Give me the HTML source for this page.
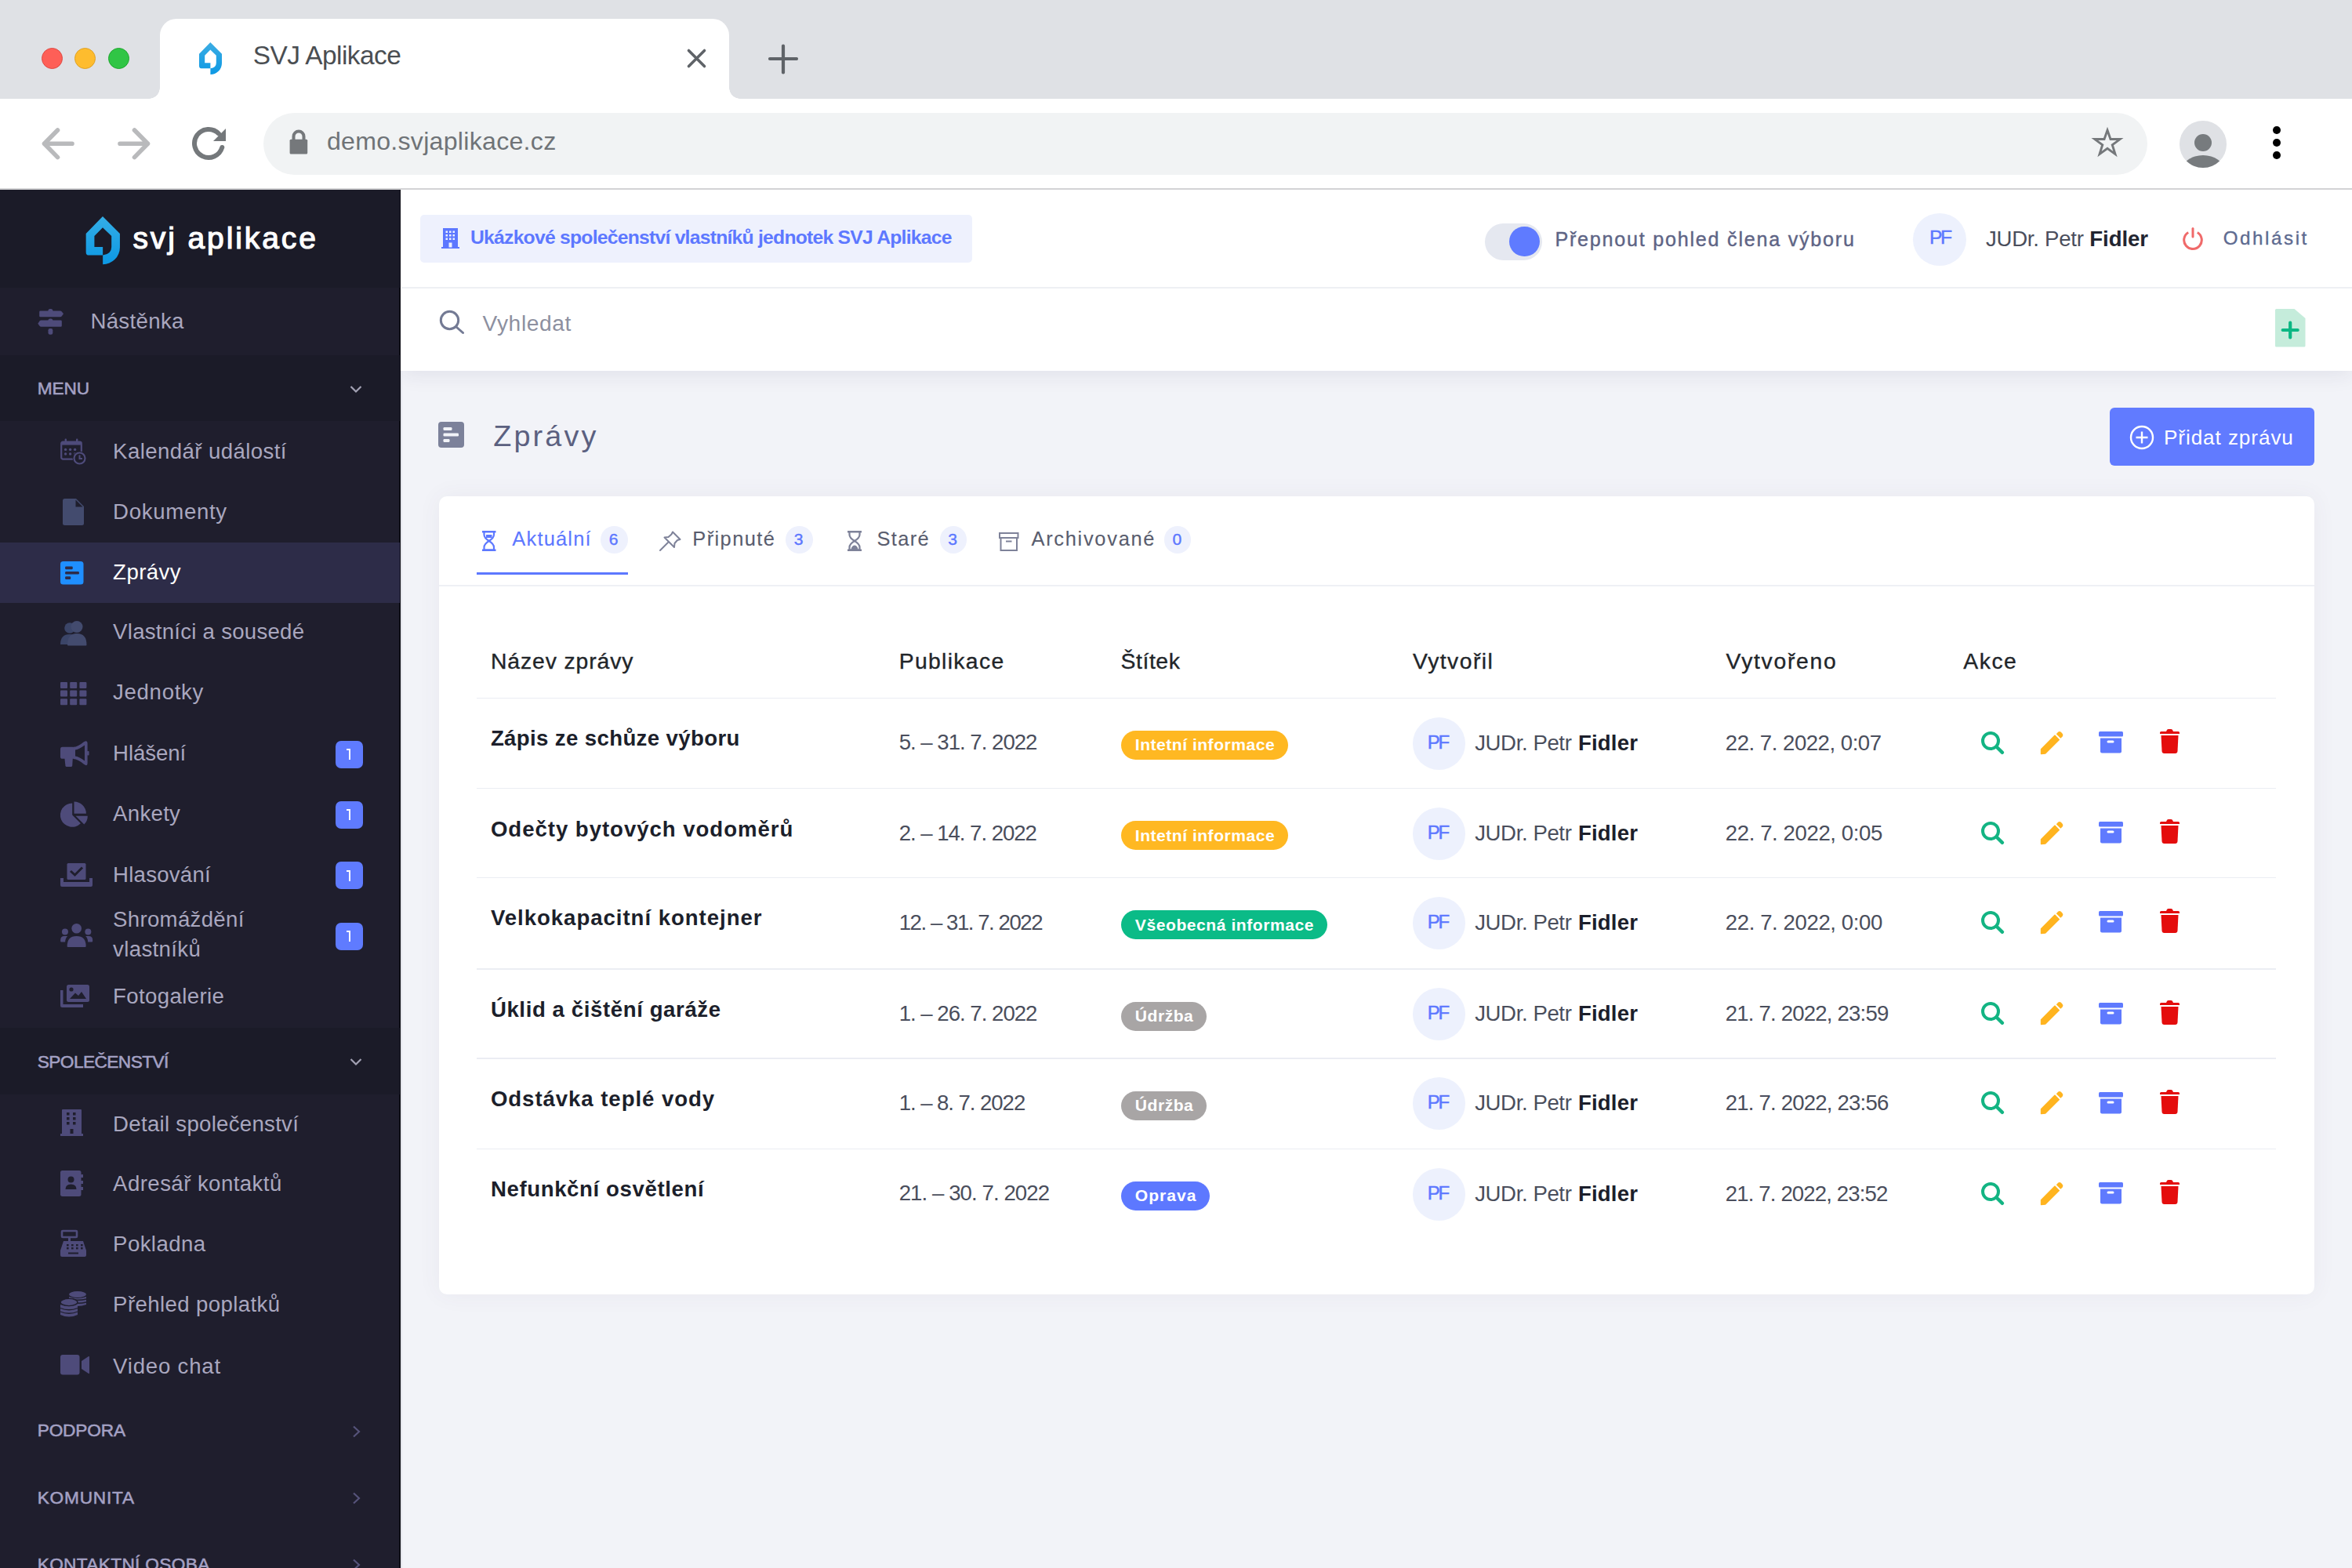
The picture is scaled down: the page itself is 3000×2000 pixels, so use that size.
<!DOCTYPE html>
<html><head><meta charset="utf-8"><title>SVJ Aplikace</title>
<style>
html,body{margin:0;padding:0;width:3000px;height:2000px;overflow:hidden;background:#fff}
body{position:relative;font-family:"Liberation Sans",sans-serif}
.abs{position:absolute}
.t{position:absolute;white-space:pre;line-height:1}
svg.abs{overflow:visible}
</style></head><body>
<div class="abs" style="left:0;top:0;width:3000px;height:126px;background:#dfe1e5"></div>
<div class="abs" style="left:53.2px;top:61.4px;width:25px;height:25px;border-radius:50%;background:#fe5f57;border:1px solid #de4a43"></div>
<div class="abs" style="left:95.2px;top:61.4px;width:25px;height:25px;border-radius:50%;background:#febc2e;border:1px solid #dea125"></div>
<div class="abs" style="left:137.6px;top:61.4px;width:25px;height:25px;border-radius:50%;background:#30c545;border:1px solid #1ea72d"></div>
<div class="abs" style="left:204px;top:24px;width:726px;height:104px;background:#fff;border-radius:21px 21px 0 0"></div>
<div class="abs" style="left:190px;top:112px;width:14px;height:14px;background:radial-gradient(circle at 0 0, #dfe1e5 13.5px, #fff 14px)"></div>
<div class="abs" style="left:930px;top:112px;width:14px;height:14px;background:radial-gradient(circle at 100% 0, #dfe1e5 13.5px, #fff 14px)"></div>
<svg class="abs" style="left:254px;top:54px" width="29" height="41" viewBox="0 0 29 41"><defs><linearGradient id="fg" x1="0" y1="0" x2="0" y2="1"><stop offset="0" stop-color="#3cade3"/><stop offset="1" stop-color="#0c98e4"/></linearGradient></defs><path fill="url(#fg)" fill-rule="evenodd" d="M14.3,0 L29,14.7 L29,26.4 A14.6,14.6 0 0 1 14.4,41 L14.4,33.2 L2.6,33.2 Q0,33.2 0,30.6 L0,14.7 Z M7.2,16.8 L14.3,9.6 L21.8,16.8 L21.8,26.2 Q21.8,32.4 14.4,33.2 L14.4,26.2 L7.2,26.2 Z"/></svg>
<div class="t" style="left:322.7px;top:54.4px;font-size:33.43px;color:#4a4e52;font-weight:400;letter-spacing:-0.54px;">SVJ Aplikace</div>
<svg class="abs" style="left:874px;top:60px" width="29" height="29" viewBox="0 0 29 29"><path d="M4.5,4.5 L24.5,24.5 M24.5,4.5 L4.5,24.5" stroke="#5f6368" stroke-width="3.6" stroke-linecap="round"/></svg>
<svg class="abs" style="left:979px;top:55px" width="40" height="40" viewBox="0 0 40 40"><path d="M20,3.6 L20,37.4 M3,20 L37,20" stroke="#5f6368" stroke-width="4.2" stroke-linecap="round"/></svg>
<div class="abs" style="left:0;top:126px;width:3000px;height:114px;background:#fff"></div>
<div class="abs" style="left:0;top:240px;width:3000px;height:2px;background:#d3d3d5"></div>
<svg class="abs" style="left:50px;top:160px" width="48" height="48" viewBox="0 0 48 48"><path d="M23.5,6 L6.5,23.3 L23.5,40.6 M6.5,23.3 L42,23.3" fill="none" stroke="#b9babc" stroke-width="5.6" stroke-linecap="round" stroke-linejoin="round"/></svg>
<svg class="abs" style="left:147px;top:160px" width="48" height="48" viewBox="0 0 48 48"><path d="M24.5,6 L41.5,23.3 L24.5,40.6 M41.5,23.3 L6,23.3" fill="none" stroke="#b9babc" stroke-width="5.6" stroke-linecap="round" stroke-linejoin="round"/></svg>
<svg class="abs" style="left:243px;top:159px" width="48" height="48" viewBox="0 0 48 48"><path d="M40.3,29 A18,18 0 1 1 36,11.5" fill="none" stroke="#74787b" stroke-width="6" stroke-linecap="round"/><path d="M45,5 L45,21 L29,21 Z" fill="#74787b"/></svg>
<div class="abs" style="left:336px;top:144px;width:2403px;height:79px;border-radius:40px;background:#f1f3f4"></div>
<svg class="abs" style="left:368px;top:164px" width="26" height="34" viewBox="0 0 26 34"><path d="M6.5,14 L6.5,10 A6.5,6.5 0 0 1 19.5,10 L19.5,14" fill="none" stroke="#75787b" stroke-width="4"/><rect x="1.6" y="13.8" width="22.6" height="18.6" rx="1.5" fill="#75787b"/></svg>
<div class="t" style="left:416.9px;top:164.3px;font-size:32.14px;color:#6f7377;font-weight:400;letter-spacing:0.27px;">demo.svjaplikace.cz</div>
<svg class="abs" style="left:2669px;top:162px" width="38" height="38" viewBox="0 0 42 42"><path d="M21,4.5 L25.4,17.2 L38.8,17.2 L27.9,25.2 L32,38.2 L21,30.2 L10,38.2 L14.1,25.2 L3.2,17.2 L16.6,17.2 Z" fill="none" stroke="#75787b" stroke-width="3.2" stroke-linejoin="miter"/></svg>
<div class="abs" style="left:2780px;top:154px;width:59.5px;height:59.5px;border-radius:50%;background:#dfe1e5;overflow:hidden"><div class="abs" style="left:18.8px;top:17.3px;width:22px;height:22px;border-radius:50%;background:#777b7e"></div><div class="abs" style="left:3px;top:43.5px;width:54px;height:40px;border-radius:50%;background:#777b7e"></div></div>
<div class="abs" style="left:2899.1px;top:161.4px;width:9.8px;height:9.8px;border-radius:50%;background:#000"></div>
<div class="abs" style="left:2899.1px;top:177.2px;width:9.8px;height:9.8px;border-radius:50%;background:#000"></div>
<div class="abs" style="left:2899.1px;top:193.1px;width:9.8px;height:9.8px;border-radius:50%;background:#000"></div>
<div class="abs" style="left:0;top:242px;width:510px;height:1758px;background:#1f1e2d"></div>
<div class="abs" style="left:508.5px;top:242px;width:2.5px;height:1758px;background:#0d0d15"></div>
<div class="abs" style="left:0;top:242px;width:510px;height:125.4px;background:#1b1b28"></div>
<div class="abs" style="left:0;top:453px;width:510px;height:84px;background:#1b1b28"></div>
<div class="abs" style="left:0;top:1311px;width:510px;height:84.5px;background:#1b1b28"></div>
<div class="abs" style="left:0;top:692px;width:510px;height:77px;background:#2d2c48"></div>
<svg class="abs" style="left:109.4px;top:275.8px" width="44.6" height="61.2" viewBox="0 0 29 41"><defs><linearGradient id="lg" x1="0" y1="0" x2="0" y2="1"><stop offset="0" stop-color="#34aee6"/><stop offset="1" stop-color="#0c98e4"/></linearGradient></defs><path fill="url(#lg)" fill-rule="evenodd" d="M14.3,0 L29,14.7 L29,26.4 A14.6,14.6 0 0 1 14.4,41 L14.4,33.2 L2.6,33.2 Q0,33.2 0,30.6 L0,14.7 Z M7.2,16.8 L14.3,9.6 L21.8,16.8 L21.8,26.2 Q21.8,32.4 14.4,33.2 L14.4,26.2 L7.2,26.2 Z"/></svg>
<div class="t" style="left:169.4px;top:284.2px;font-size:39.02px;color:#ffffff;font-weight:400;letter-spacing:2.9px;-webkit-text-stroke:1.2px #fff;">svj aplikace</div>
<svg class="abs" style="left:48px;top:393.6px" width="33" height="33" viewBox="0 0 33 33"><rect x="13.4" y="0" width="6" height="5" rx="2.5" fill="#4e4b7a"/><path d="M3.5,2.4 L28.8,2.4 Q30,2.4 30.8,3.4 L33,6.3 L30.8,9.2 Q30,10.2 28.8,10.2 L3.5,10.2 Q2.2,10.2 2.2,8.9 L2.2,3.7 Q2.2,2.4 3.5,2.4 Z" fill="#4e4b7a"/><rect x="13.4" y="12.6" width="6" height="5" rx="2.5" fill="#4e4b7a"/><path d="M4.5,14.6 L29.5,14.6 Q30.8,14.6 30.8,15.9 L30.8,21.5 Q30.8,22.8 29.5,22.8 L4.5,22.8 Q3.3,22.8 2.5,21.8 L0.3,18.7 L2.5,15.6 Q3.3,14.6 4.5,14.6 Z" fill="#4e4b7a"/><rect x="13.5" y="25" width="5.8" height="7.8" rx="2.2" fill="#4e4b7a"/></svg>
<div class="t" style="left:115.4px;top:395.6px;font-size:27.62px;color:#a9a7bf;font-weight:400;letter-spacing:0.34px;">Nástěnka</div>
<div class="t" style="left:47.8px;top:484.4px;font-size:22.67px;color:#a4a1c4;font-weight:400;letter-spacing:-0.14px;color:#a4a1c4;-webkit-text-stroke:0.55px #a4a1c4;">MENU</div>
<div class="t" style="left:47.7px;top:1343.3px;font-size:22.67px;color:#a4a1c4;font-weight:400;letter-spacing:-0.55px;color:#a4a1c4;-webkit-text-stroke:0.55px #a4a1c4;">SPOLEČENSTVÍ</div>
<div class="t" style="left:47.7px;top:1813.4px;font-size:22.67px;color:#a4a1c4;font-weight:400;letter-spacing:-0.15px;color:#a4a1c4;-webkit-text-stroke:0.55px #a4a1c4;">PODPORA</div>
<div class="t" style="left:47.7px;top:1898.5px;font-size:22.67px;color:#a4a1c4;font-weight:400;letter-spacing:0.79px;color:#a4a1c4;-webkit-text-stroke:0.55px #a4a1c4;">KOMUNITA</div>
<div class="t" style="left:47.7px;top:1983.6px;font-size:22.67px;color:#a4a1c4;font-weight:400;letter-spacing:0.34px;color:#a4a1c4;-webkit-text-stroke:0.55px #a4a1c4;">KONTAKTNÍ OSOBA</div>
<svg class="abs" style="left:446px;top:490.7px" width="16" height="12" viewBox="0 0 16 12"><path d="M1.5,2 L8,8.5 L14.5,2" fill="none" stroke="#a3a2b4" stroke-width="2.2"/></svg>
<svg class="abs" style="left:446px;top:1349px" width="16" height="12" viewBox="0 0 16 12"><path d="M1.5,2 L8,8.5 L14.5,2" fill="none" stroke="#a3a2b4" stroke-width="2.2"/></svg>
<svg class="abs" style="left:449px;top:1817.6px" width="12" height="16" viewBox="0 0 12 16"><path d="M2,1.5 L9,8 L2,14.5" fill="none" stroke="#56537a" stroke-width="2.2"/></svg>
<svg class="abs" style="left:449px;top:1902.7px" width="12" height="16" viewBox="0 0 12 16"><path d="M2,1.5 L9,8 L2,14.5" fill="none" stroke="#56537a" stroke-width="2.2"/></svg>
<svg class="abs" style="left:449px;top:1987.8px" width="12" height="16" viewBox="0 0 12 16"><path d="M2,1.5 L9,8 L2,14.5" fill="none" stroke="#56537a" stroke-width="2.2"/></svg>
<div class="t" style="left:144.1px;top:561.6px;font-size:27.62px;color:#a9a7bf;font-weight:400;letter-spacing:0.4px;">Kalendář událostí</div>
<div class="t" style="left:144.1px;top:638.6px;font-size:27.62px;color:#a9a7bf;font-weight:400;letter-spacing:0.67px;">Dokumenty</div>
<div class="t" style="left:144.1px;top:715.6px;font-size:27.62px;color:#ffffff;font-weight:400;letter-spacing:0.42px;">Zprávy</div>
<div class="t" style="left:144.1px;top:792.4px;font-size:27.62px;color:#a9a7bf;font-weight:400;letter-spacing:0.25px;">Vlastníci a sousedé</div>
<div class="t" style="left:144.1px;top:869.4px;font-size:27.62px;color:#a9a7bf;font-weight:400;letter-spacing:0.67px;">Jednotky</div>
<div class="t" style="left:144.1px;top:946.6px;font-size:27.62px;color:#a9a7bf;font-weight:400;letter-spacing:-0.1px;">Hlášení</div>
<div class="t" style="left:144.1px;top:1024.1px;font-size:27.62px;color:#a9a7bf;font-weight:400;letter-spacing:0.28px;">Ankety</div>
<div class="t" style="left:144.1px;top:1101.9px;font-size:27.62px;color:#a9a7bf;font-weight:400;letter-spacing:0.22px;">Hlasování</div>
<div class="t" style="left:144.1px;top:1159.4px;font-size:27.62px;color:#a9a7bf;font-weight:400;letter-spacing:0.3px;">Shromáždění</div>
<div class="t" style="left:144.1px;top:1197.0px;font-size:27.62px;color:#a9a7bf;font-weight:400;letter-spacing:0.34px;">vlastníků</div>
<div class="t" style="left:144.1px;top:1257.3px;font-size:27.62px;color:#a9a7bf;font-weight:400;letter-spacing:0.37px;">Fotogalerie</div>
<div class="t" style="left:144.1px;top:1419.6px;font-size:27.62px;color:#a9a7bf;font-weight:400;letter-spacing:0.28px;">Detail společenství</div>
<div class="t" style="left:144.1px;top:1496.3px;font-size:27.62px;color:#a9a7bf;font-weight:400;letter-spacing:0.43px;">Adresář kontaktů</div>
<div class="t" style="left:144.1px;top:1573.3px;font-size:27.62px;color:#a9a7bf;font-weight:400;letter-spacing:0.4px;">Pokladna</div>
<div class="t" style="left:144.1px;top:1650.2px;font-size:27.62px;color:#a9a7bf;font-weight:400;letter-spacing:0.39px;">Přehled poplatků</div>
<div class="t" style="left:144.1px;top:1728.5px;font-size:27.62px;color:#a9a7bf;font-weight:400;letter-spacing:0.79px;">Video chat</div>
<div class="abs" style="left:428px;top:944.7px;width:35px;height:35px;border-radius:7px;background:#5f7bff"></div>
<div class="abs" style="left:445px;top:955.2px;width:2.2px;height:14px;background:#fff"></div>
<div class="abs" style="left:442.4px;top:955.2px;width:3px;height:2px;background:#fff"></div>
<div class="abs" style="left:428px;top:1021.7px;width:35px;height:35px;border-radius:7px;background:#5f7bff"></div>
<div class="abs" style="left:445px;top:1032.2px;width:2.2px;height:14px;background:#fff"></div>
<div class="abs" style="left:442.4px;top:1032.2px;width:3px;height:2px;background:#fff"></div>
<div class="abs" style="left:428px;top:1099px;width:35px;height:35px;border-radius:7px;background:#5f7bff"></div>
<div class="abs" style="left:445px;top:1109.5px;width:2.2px;height:14px;background:#fff"></div>
<div class="abs" style="left:442.4px;top:1109.5px;width:3px;height:2px;background:#fff"></div>
<div class="abs" style="left:428px;top:1176.6px;width:35px;height:35px;border-radius:7px;background:#5f7bff"></div>
<div class="abs" style="left:445px;top:1187.1px;width:2.2px;height:14px;background:#fff"></div>
<div class="abs" style="left:442.4px;top:1187.1px;width:3px;height:2px;background:#fff"></div>
<svg class="abs" style="left:77px;top:559px" width="34" height="35" viewBox="0 0 34 35"><rect x="1.2" y="4.6" width="25.6" height="22" rx="2.2" fill="none" stroke="#4e4b7a" stroke-width="2.2"/><rect x="1.2" y="4.6" width="25.6" height="4" fill="#4e4b7a"/><rect x="5.6" y="0.5" width="2.4" height="6" rx="1" fill="#4e4b7a"/><rect x="20" y="0.5" width="2.4" height="6" rx="1" fill="#4e4b7a"/><circle cx="6.6" cy="14.4" r="1.7" fill="#4e4b7a"/><circle cx="6.6" cy="20.0" r="1.7" fill="#4e4b7a"/><circle cx="12.6" cy="14.4" r="1.7" fill="#4e4b7a"/><circle cx="12.6" cy="20.0" r="1.7" fill="#4e4b7a"/><circle cx="18.6" cy="14.4" r="1.7" fill="#4e4b7a"/><circle cx="18.6" cy="20.0" r="1.7" fill="#4e4b7a"/><circle cx="24.5" cy="25.5" r="9" fill="#1f1e2d"/><circle cx="24.5" cy="25.5" r="7" fill="none" stroke="#4e4b7a" stroke-width="2.2"/><path d="M24.5,21.5 L24.5,26 L28,26" fill="none" stroke="#4e4b7a" stroke-width="2"/></svg>
<svg class="abs" style="left:80px;top:636px" width="27" height="34" viewBox="0 0 27 34"><path d="M2.5,0 L17,0 L27,10 L27,31.5 Q27,34 24.5,34 L2.5,34 Q0,34 0,31.5 L0,2.5 Q0,0 2.5,0 Z" fill="#434b6e"/><path d="M16.5,1.5 L16.5,10.5 L25.5,10.5 Z" fill="#1f1e2d"/></svg>
<svg class="abs" style="left:77px;top:715.6px" width="29.5" height="29.5" viewBox="0 0 29 29"><rect x="0" y="0" width="29" height="29" rx="3.5" fill="#1f8fff"/><rect x="6" y="6.5" width="9.5" height="3.5" rx="1.2" fill="#2d2c48"/><rect x="6" y="12.8" width="17.5" height="3.5" rx="1.2" fill="#2d2c48"/><rect x="6" y="19" width="7" height="3.5" rx="1.2" fill="#2d2c48"/></svg>
<svg class="abs" style="left:77px;top:792px" width="34" height="32" viewBox="0 0 34 32"><circle cx="12" cy="9" r="6.8" fill="#3b4568"/><path d="M0,30 Q0,17 12,17 Q24,17 24,30 Z" fill="#3b4568"/><circle cx="21" cy="7.5" r="7.5" fill="#434b6e"/><path d="M9,30.5 Q9,16 21,16 Q33.5,16 33.5,30.5 Q33.5,31.5 32.5,31.5 L10,31.5 Q9,31.5 9,30.5 Z" fill="#434b6e"/></svg>
<svg class="abs" style="left:77px;top:870px" width="34" height="30" viewBox="0 0 34 30"><rect x="0.0" y="0.0" width="9" height="8" rx="1" fill="#4e4b7a"/><rect x="0.0" y="10.6" width="9" height="8" rx="1" fill="#4e4b7a"/><rect x="0.0" y="21.2" width="9" height="8" rx="1" fill="#4e4b7a"/><rect x="12.2" y="0.0" width="9" height="8" rx="1" fill="#4e4b7a"/><rect x="12.2" y="10.6" width="9" height="8" rx="1" fill="#4e4b7a"/><rect x="12.2" y="21.2" width="9" height="8" rx="1" fill="#4e4b7a"/><rect x="24.4" y="0.0" width="9" height="8" rx="1" fill="#4e4b7a"/><rect x="24.4" y="10.6" width="9" height="8" rx="1" fill="#4e4b7a"/><rect x="24.4" y="21.2" width="9" height="8" rx="1" fill="#4e4b7a"/></svg>
<svg class="abs" style="left:77px;top:945px" width="37" height="33" viewBox="0 0 37 33"><rect x="0" y="7.8" width="18" height="15" rx="2.6" fill="#4e4b7a"/><path d="M5.4,22 L15.8,22 L15.2,31.5 Q15,33 13.5,33 L8,33 Q6.6,33 6.4,31.5 Z" fill="#4e4b7a"/><path fill-rule="evenodd" fill="#4e4b7a" d="M16.5,7.8 Q22,7.8 30,1.2 Q34.6,-1.4 34.6,3 L34.6,28.6 Q34.6,33 30,29.8 Q22,23 16.5,23 Z M19,11.6 Q23.5,11 31,5.6 L31,25.4 Q23.5,20 19,19.4 Z"/><rect x="34" y="13" width="2.6" height="5.6" rx="1" fill="#4e4b7a"/></svg>
<svg class="abs" style="left:77px;top:1022px" width="35" height="34" viewBox="0 0 35 34"><path d="M15.2,17.6 L15.2,2.4 A15.2,15.2 0 1 0 25.9,28.3 Z" fill="#4e4b7a"/><path d="M17.5,0.4 A15.4,15.4 0 0 1 32.9,15.8 L17.5,15.8 Z" fill="#4e4b7a"/><path d="M19.5,18.7 L34.8,18.7 A15.3,15.3 0 0 1 30.3,29.5 Z" fill="#4e4b7a"/></svg>
<svg class="abs" style="left:77px;top:1101px" width="41" height="30" viewBox="0 0 41 30"><rect x="8.5" y="0" width="24" height="21" rx="1.5" fill="#4e4b7a"/><path d="M13,10 L18.5,15 L28,5.5" fill="none" stroke="#1f1e2d" stroke-width="3"/><path d="M0,19 L4,19 L4,24 L37,24 L37,19 L41,19 L41,28 Q41,30 39,30 L2,30 Q0,30 0,28 Z" fill="#4e4b7a"/></svg>
<svg class="abs" style="left:77px;top:1178px" width="41.3" height="30" viewBox="0 0 41 30"><circle cx="20.5" cy="6.3" r="6.3" fill="#4e4b7a"/><circle cx="5.8" cy="10.4" r="4" fill="#4e4b7a"/><circle cx="35.2" cy="10.4" r="4" fill="#4e4b7a"/><path d="M8.5,29 Q8.5,16 20.5,16 Q32.5,16 32.5,29 Q32.5,30 31.5,30 L9.5,30 Q8.5,30 8.5,29 Z" fill="#4e4b7a"/><path d="M0,21 Q0,16 5,16 L9,16 Q6,19 6,23.5 L1,23.5 Q0,23.5 0,22.5 Z" fill="#4e4b7a"/><path d="M41,21 Q41,16 36,16 L32,16 Q35,19 35,23.5 L40,23.5 Q41,23.5 41,22.5 Z" fill="#4e4b7a"/></svg>
<svg class="abs" style="left:77px;top:1255.8px" width="37" height="29" viewBox="0 0 37 29"><rect x="8" y="0" width="29" height="22" rx="2.5" fill="#4e4b7a"/><circle cx="14" cy="6" r="2.6" fill="#1f1e2d"/><path d="M12,18 L19,10.5 L23,14 L27,9 L33,18 Z" fill="#1f1e2d"/><path d="M0,7 L3.5,7 L3.5,25 L29,25 L29,29 L2.5,29 Q0,29 0,26.5 Z" fill="#4e4b7a"/></svg>
<svg class="abs" style="left:77px;top:1415.4px" width="29" height="34" viewBox="0 0 29 34"><rect x="2" y="0" width="25" height="33" rx="1" fill="#4e4b7a"/><rect x="0" y="31" width="29" height="3" fill="#4e4b7a"/><rect x="8" y="4" width="3.5" height="3.5" fill="#1f1e2d"/><rect x="8" y="10" width="3.5" height="3.5" fill="#1f1e2d"/><rect x="8" y="16" width="3.5" height="3.5" fill="#1f1e2d"/><rect x="16" y="4" width="3.5" height="3.5" fill="#1f1e2d"/><rect x="16" y="10" width="3.5" height="3.5" fill="#1f1e2d"/><rect x="16" y="16" width="3.5" height="3.5" fill="#1f1e2d"/><rect x="12.5" y="25" width="4" height="6" fill="#1f1e2d"/></svg>
<svg class="abs" style="left:77px;top:1493px" width="29" height="33" viewBox="0 0 29 33"><path d="M2.5,0 L24,0 Q26.5,0 26.5,2.5 L26.5,5 L29,5 L29,9 L26.5,9 L26.5,13 L29,13 L29,17 L26.5,17 L26.5,21 L29,21 L29,25 L26.5,25 L26.5,30.5 Q26.5,33 24,33 L2.5,33 Q0,33 0,30.5 L0,2.5 Q0,0 2.5,0 Z" fill="#4e4b7a"/><circle cx="13.5" cy="11.5" r="4" fill="#1f1e2d"/><path d="M6.5,24 Q6.5,17.5 13.5,17.5 Q20.5,17.5 20.5,24 Z" fill="#1f1e2d"/></svg>
<svg class="abs" style="left:77px;top:1570px" width="33" height="33" viewBox="0 0 33 33"><rect x="2" y="0" width="19" height="8" rx="1" fill="none" stroke="#4e4b7a" stroke-width="2.6"/><rect x="10" y="8" width="3" height="6" fill="#4e4b7a"/><path d="M4,13 L29,13 L33,25 L33,31 Q33,33 31,33 L2,33 Q0,33 0,31 L0,25 Z" fill="#4e4b7a"/><rect x="8" y="17" width="2.6" height="2.4" fill="#1f1e2d"/><rect x="8" y="21" width="2.6" height="2.4" fill="#1f1e2d"/><rect x="14" y="17" width="2.6" height="2.4" fill="#1f1e2d"/><rect x="14" y="21" width="2.6" height="2.4" fill="#1f1e2d"/><rect x="20" y="17" width="2.6" height="2.4" fill="#1f1e2d"/><rect x="20" y="21" width="2.6" height="2.4" fill="#1f1e2d"/><rect x="26" y="17" width="2.6" height="2.4" fill="#1f1e2d"/><rect x="26" y="21" width="2.6" height="2.4" fill="#1f1e2d"/><rect x="10" y="27.5" width="13" height="2" fill="#1f1e2d"/></svg>
<svg class="abs" style="left:77px;top:1647px" width="34" height="34" viewBox="0 0 34 34"><ellipse cx="22" cy="4" rx="11" ry="4" fill="#4e4b7a"/><path d="M11,7 Q22,11 33,7 L33,17 Q22,21 11,17 Z" fill="#4e4b7a"/><path d="M16,10 Q22,12.5 33,10" stroke="#1f1e2d" stroke-width="1.3" fill="none"/><path d="M16,14 Q22,16.5 33,14" stroke="#1f1e2d" stroke-width="1.3" fill="none"/><ellipse cx="11" cy="14" rx="11" ry="4.6" fill="#4e4b7a" stroke="#1f1e2d" stroke-width="1.4"/><path d="M0,17 Q11,21.5 22,17 L22,30 Q11,35 0,30 Z" fill="#4e4b7a"/><path d="M0,21.5 Q11,26 22,21.5 M0,26 Q11,30.5 22,26" stroke="#1f1e2d" stroke-width="1.3" fill="none"/></svg>
<svg class="abs" style="left:77px;top:1728px" width="37" height="26" viewBox="0 0 37 26"><rect x="0" y="0" width="24.5" height="25.5" rx="3" fill="#4e4b7a"/><path d="M27,8 L36,2 Q37,1.5 37,3 L37,23 Q37,24.5 36,24 L27,18 Z" fill="#4e4b7a"/></svg>
<div class="abs" style="left:512px;top:242px;width:2488px;height:1758px;background:#f2f3f8;overflow:hidden">
<div class="abs" style="left:-512px;top:-242px;width:3000px;height:2000px">
<div class="abs" style="left:512px;top:242px;width:2488px;height:230.5px;background:#fff;box-shadow:0 6px 24px rgba(40,40,80,0.08)"></div>
<div class="abs" style="left:512px;top:366px;width:2488px;height:1.5px;background:#eef0f4"></div>
<div class="abs" style="left:536.4px;top:274px;width:704px;height:61px;border-radius:5px;background:#eef1fd"></div>
<svg class="abs" style="left:563px;top:291px" width="23" height="26" viewBox="0 0 23 26"><rect x="2" y="0" width="19" height="25" fill="#5d78ff"/><rect x="0" y="24" width="23" height="2" fill="#5d78ff"/><rect x="5.5" y="3.5" width="2.5" height="2.5" fill="#eef1fd"/><rect x="5.5" y="8.0" width="2.5" height="2.5" fill="#eef1fd"/><rect x="5.5" y="12.5" width="2.5" height="2.5" fill="#eef1fd"/><rect x="10.0" y="3.5" width="2.5" height="2.5" fill="#eef1fd"/><rect x="10.0" y="8.0" width="2.5" height="2.5" fill="#eef1fd"/><rect x="10.0" y="12.5" width="2.5" height="2.5" fill="#eef1fd"/><rect x="14.5" y="3.5" width="2.5" height="2.5" fill="#eef1fd"/><rect x="14.5" y="8.0" width="2.5" height="2.5" fill="#eef1fd"/><rect x="14.5" y="12.5" width="2.5" height="2.5" fill="#eef1fd"/><rect x="9.5" y="18.5" width="4" height="6" fill="#eef1fd"/></svg>
<div class="t" style="left:600.0px;top:290.5px;font-size:24.71px;color:#5d78ff;font-weight:700;letter-spacing:-0.76px;">Ukázkové společenství vlastníků jednotek SVJ Aplikace</div>
<div class="abs" style="left:1894.4px;top:285.4px;width:73px;height:46.5px;border-radius:24px;background:#e5e8f0"></div>
<div class="abs" style="left:1925.3px;top:288.7px;width:38.7px;height:38.7px;border-radius:50%;background:#5f7bff"></div>
<div class="t" style="left:1983.4px;top:292.9px;font-size:25.15px;color:#5e6485;font-weight:400;letter-spacing:1.76px;-webkit-text-stroke:0.4px #5e6485;">Přepnout pohled člena výboru</div>
<div class="abs" style="left:2440.2px;top:271.9px;width:67.5px;height:67px;border-radius:50%;background:#edf1fd"></div>
<div class="t" style="left:2461.0px;top:291.1px;font-size:24.71px;color:#5d78ff;font-weight:400;letter-spacing:-2.6px;-webkit-text-stroke:0.5px #5d78ff;">PF</div>
<div class="t" style="left:2532.9px;top:290.9px;font-size:27.62px;color:#4a4e5c;font-weight:400;letter-spacing:-0.25px;">JUDr. Petr</div>
<div class="t" style="left:2665.3px;top:290.9px;font-size:27.62px;color:#222530;font-weight:700;letter-spacing:-0.07px;">Fidler</div>
<svg class="abs" style="left:2783px;top:290px" width="28" height="28" viewBox="0 0 28 28"><path d="M8.2,6.5 A11.3,11.3 0 1 0 19.8,6.5" fill="none" stroke="#f06a6a" stroke-width="3"/><path d="M14,1.5 L14,12" stroke="#f06a6a" stroke-width="3" stroke-linecap="round"/></svg>
<div class="t" style="left:2835.7px;top:291.6px;font-size:24.13px;color:#5d6a90;font-weight:400;letter-spacing:2.59px;-webkit-text-stroke:0.35px #5d6a90;">Odhlásit</div>
<svg class="abs" style="left:559.5px;top:394.8px" width="33" height="31" viewBox="0 0 33 31"><circle cx="13.5" cy="13.5" r="11.2" fill="none" stroke="#737a94" stroke-width="3"/><path d="M22,22 L30.5,29.5" stroke="#737a94" stroke-width="3" stroke-linecap="round"/></svg>
<div class="t" style="left:615.6px;top:398.1px;font-size:28.2px;color:#8d90a0;font-weight:400;letter-spacing:0.59px;">Vyhledat</div>
<svg class="abs" style="left:2901.7px;top:394px" width="38.5" height="48.5" viewBox="0 0 38.5 48.5"><path d="M1.5,0 L24.5,0 L38.5,12 L38.5,47 Q38.5,48.5 37,48.5 L1.5,48.5 Q0,48.5 0,47 L0,1.5 Q0,0 1.5,0 Z" fill="#c5ecdb"/><path d="M19.2,17.5 L19.2,36.5 M9.7,27 L28.7,27" stroke="#0bb783" stroke-width="4.2" stroke-linecap="round"/></svg>
<svg class="abs" style="left:559.4px;top:538px" width="33" height="33" viewBox="0 0 33 33"><rect x="0" y="0" width="33" height="33" rx="4" fill="#7c819a"/><rect x="6.5" y="7" width="11" height="4" rx="1.3" fill="#f2f3f8"/><rect x="6.5" y="14.5" width="19.5" height="4" rx="1.3" fill="#f2f3f8"/><rect x="6.5" y="22" width="8" height="4" rx="1.3" fill="#f2f3f8"/></svg>
<div class="t" style="left:629.3px;top:537.6px;font-size:37.79px;color:#5b6080;font-weight:400;letter-spacing:3.11px;">Zprávy</div>
<div class="abs" style="left:2691px;top:520.2px;width:260.7px;height:74px;border-radius:6px;background:#617bff"></div>
<svg class="abs" style="left:2716px;top:542px" width="32" height="32" viewBox="0 0 32 32"><circle cx="16" cy="16" r="14" fill="none" stroke="#fff" stroke-width="2.4"/><path d="M16,8.5 L16,23.5 M8.5,16 L23.5,16" stroke="#fff" stroke-width="2.4"/></svg>
<div class="t" style="left:2760.0px;top:545.1px;font-size:26.16px;color:#ffffff;font-weight:400;letter-spacing:0.9px;">Přidat zprávu</div>
<div class="abs" style="left:559.5px;top:632.5px;width:2392.2px;height:1018.3px;border-radius:10px;background:#fff;box-shadow:0 0 30px rgba(82,63,105,0.06)"></div>
<div class="abs" style="left:559.5px;top:746.3px;width:2392.2px;height:1.5px;background:#eef0f5"></div>
<svg class="abs" style="left:614px;top:677px" width="19.5" height="26" viewBox="0 0 19.5 26"><path d="M1,1.2 L18.5,1.2 M1,24.8 L18.5,24.8" stroke="#5d78ff" stroke-width="2.4"/><path d="M3.5,1.5 L3.5,5 Q3.5,9 9.75,13 Q16,17 16,21 L16,24.5 L3.5,24.5 L3.5,21 Q3.5,17 9.75,13 Q16,9 16,5 L16,1.5" fill="none" stroke="#5d78ff" stroke-width="2.2"/><rect x="6" y="5" width="7.5" height="4" fill="#5d78ff"/></svg>
<div class="t" style="left:653.3px;top:675.0px;font-size:25.44px;color:#5d78ff;font-weight:400;letter-spacing:1.2px;-webkit-text-stroke:0.1px #5d78ff;">Aktuální</div>
<div class="abs" style="left:607.8px;top:730px;width:193px;height:3.2px;background:#5d78ff"></div>
<div class="abs" style="left:766px;top:671px;width:34.6px;height:34.6px;border-radius:50%;background:#eef1fd"></div>
<div class="t" style="left:776.7px;top:677.0px;font-size:21.08px;color:#5d78ff;font-weight:400;letter-spacing:0px;-webkit-text-stroke:0.4px #5d78ff;">6</div>
<div class="abs" style="left:1002px;top:671px;width:34.6px;height:34.6px;border-radius:50%;background:#eef1fd"></div>
<div class="t" style="left:1012.7px;top:677.0px;font-size:21.08px;color:#5d78ff;font-weight:400;letter-spacing:0px;-webkit-text-stroke:0.4px #5d78ff;">3</div>
<div class="abs" style="left:1198.6px;top:671px;width:34.6px;height:34.6px;border-radius:50%;background:#eef1fd"></div>
<div class="t" style="left:1209.3px;top:677.0px;font-size:21.08px;color:#5d78ff;font-weight:400;letter-spacing:0px;-webkit-text-stroke:0.4px #5d78ff;">3</div>
<div class="abs" style="left:1484.8px;top:671px;width:34.6px;height:34.6px;border-radius:50%;background:#eef1fd"></div>
<div class="t" style="left:1495.5px;top:677.0px;font-size:21.08px;color:#5d78ff;font-weight:400;letter-spacing:0px;-webkit-text-stroke:0.4px #5d78ff;">0</div>
<svg class="abs" style="left:841.4px;top:677px" width="28" height="26" viewBox="0 0 28 26"><path d="M17,1.5 L26.5,11 L23,12 L19.5,16 L19,21 L6.5,8.5 L11.5,8 L15.5,4.5 Z" fill="none" stroke="#7e8299" stroke-width="2" stroke-linejoin="round"/><path d="M11,15 L1,25" stroke="#7e8299" stroke-width="2" stroke-linecap="round"/></svg>
<div class="t" style="left:883.3px;top:675.0px;font-size:25.44px;color:#595d6e;font-weight:400;letter-spacing:1.4px;-webkit-text-stroke:0.1px #595d6e;">Připnuté</div>
<svg class="abs" style="left:1080px;top:677px" width="20" height="26" viewBox="0 0 20 26"><path d="M1,1.2 L19,1.2 M1,24.8 L19,24.8" stroke="#7e8299" stroke-width="2.4"/><path d="M3.5,1.5 L3.5,5 Q3.5,9 10,13 Q16.5,17 16.5,21 L16.5,24.5 L3.5,24.5 L3.5,21 Q3.5,17 10,13 Q16.5,9 16.5,5 L16.5,1.5" fill="none" stroke="#7e8299" stroke-width="2.2"/><path d="M5.5,24 Q6,19 10,18.5 Q14,19 14.5,24 Z" fill="#7e8299"/></svg>
<div class="t" style="left:1118.4px;top:675.0px;font-size:25.44px;color:#595d6e;font-weight:400;letter-spacing:1.36px;-webkit-text-stroke:0.1px #595d6e;">Staré</div>
<svg class="abs" style="left:1274px;top:679px" width="25.5" height="24" viewBox="0 0 25.5 24"><rect x="1" y="1" width="23.5" height="6" fill="none" stroke="#7e8299" stroke-width="2"/><path d="M2.5,7 L2.5,23 L23,23 L23,7" fill="none" stroke="#7e8299" stroke-width="2"/><path d="M9,11.5 L16.5,11.5" stroke="#7e8299" stroke-width="2"/></svg>
<div class="t" style="left:1315.5px;top:675.0px;font-size:25.44px;color:#595d6e;font-weight:400;letter-spacing:1.7px;-webkit-text-stroke:0.1px #595d6e;">Archivované</div>
<div class="t" style="left:625.9px;top:829.0px;font-size:28.34px;color:#212529;font-weight:400;letter-spacing:0.91px;-webkit-text-stroke:0.35px #212529;">Název zprávy</div>
<div class="t" style="left:1146.7px;top:829.0px;font-size:28.34px;color:#212529;font-weight:400;letter-spacing:1.33px;-webkit-text-stroke:0.35px #212529;">Publikace</div>
<div class="t" style="left:1429.5px;top:829.0px;font-size:28.34px;color:#212529;font-weight:400;letter-spacing:0.59px;-webkit-text-stroke:0.35px #212529;">Štítek</div>
<div class="t" style="left:1801.9px;top:829.0px;font-size:28.34px;color:#212529;font-weight:400;letter-spacing:1.45px;-webkit-text-stroke:0.35px #212529;">Vytvořil</div>
<div class="t" style="left:2201.6px;top:829.0px;font-size:28.34px;color:#212529;font-weight:400;letter-spacing:1.7px;-webkit-text-stroke:0.35px #212529;">Vytvořeno</div>
<div class="t" style="left:2504.3px;top:829.0px;font-size:28.34px;color:#212529;font-weight:400;letter-spacing:1.53px;-webkit-text-stroke:0.35px #212529;">Akce</div>
<div class="abs" style="left:607.8px;top:889.5px;width:2295.6px;height:1.6px;background:#ebedf3"></div>
<div class="abs" style="left:607.8px;top:1004.9px;width:2295.6px;height:1.6px;background:#ebedf3"></div>
<div class="abs" style="left:607.8px;top:1118.8px;width:2295.6px;height:1.6px;background:#ebedf3"></div>
<div class="abs" style="left:607.8px;top:1235.1px;width:2295.6px;height:1.6px;background:#ebedf3"></div>
<div class="abs" style="left:607.8px;top:1349.0px;width:2295.6px;height:1.6px;background:#ebedf3"></div>
<div class="abs" style="left:607.8px;top:1464.5px;width:2295.6px;height:1.6px;background:#ebedf3"></div>
<div class="t" style="left:625.9px;top:928.1px;font-size:27.62px;color:#1c1f2b;font-weight:700;letter-spacing:0.36px;">Zápis ze schůze výboru</div>
<div class="t" style="left:1146.7px;top:933.4px;font-size:27.62px;color:#4a4e5c;font-weight:400;letter-spacing:-1.01px;">5. – 31. 7. 2022</div>
<div class="abs" style="left:1429.5px;top:932px;width:213.7px;height:37px;border-radius:19px;background:#ffb822"></div>
<div class="t" style="left:1447.8px;top:939.2px;font-size:21.08px;color:#ffffff;font-weight:700;letter-spacing:0.5px;">Intetní informace</div>
<div class="abs" style="left:1802px;top:914.6px;width:67.4px;height:67px;border-radius:50%;background:#edf1fd"></div>
<div class="t" style="left:1820.8px;top:934.5px;font-size:23.98px;color:#5d78ff;font-weight:400;letter-spacing:-2.22px;-webkit-text-stroke:0.5px #5d78ff;">PF</div>
<div class="t" style="left:1881.2px;top:933.6px;font-size:27.62px;color:#4a4e5c;font-weight:400;letter-spacing:-0.41px;">JUDr. Petr</div>
<div class="t" style="left:2012.9px;top:933.6px;font-size:27.62px;color:#1c1f2b;font-weight:700;letter-spacing:0.17px;">Fidler</div>
<div class="t" style="left:2200.8px;top:933.6px;font-size:27.62px;color:#4a4e5c;font-weight:400;letter-spacing:-0.5px;">22. 7. 2022, 0:07</div>
<svg class="abs" style="left:2525px;top:930.6px" width="33" height="32" viewBox="0 0 33 32"><circle cx="14" cy="14" r="10" fill="none" stroke="#13b483" stroke-width="4"/><path d="M21.5,21.5 L29,28.8" stroke="#13b483" stroke-width="4.4" stroke-linecap="round"/></svg>
<svg class="abs" style="left:2601.5px;top:931.5px" width="30.5" height="30.5" viewBox="0 0 33 33"><path d="M1.5,32 L1.5,25.5 L20.5,6.5 L26.5,12.5 L7.5,31.5 Z" fill="#ffb41f" stroke="#ffb41f" stroke-width="1.2" stroke-linejoin="round"/><path d="M22.5,4.5 L25,2 Q27,0.3 29,2 L31,4 Q32.7,6 31,8 L28.5,10.5 Z" fill="#ffb41f"/></svg>
<svg class="abs" style="left:2677px;top:933px" width="31" height="28" viewBox="0 0 31 28"><rect x="0" y="0" width="31" height="6.5" rx="1.5" fill="#5f7afe"/><path d="M2,8.5 L29,8.5 L29,25.5 Q29,27.5 27,27.5 L4,27.5 Q2,27.5 2,25.5 Z" fill="#5f7afe"/><rect x="10.5" y="11.5" width="9" height="3" rx="1.5" fill="#ffffff"/></svg>
<svg class="abs" style="left:2755px;top:930px" width="25" height="31" viewBox="0 0 25 31"><path d="M0,4.5 Q0,3 1.5,3 L8,3 L9,1 Q9.5,0 11,0 L14,0 Q15.5,0 16,1 L17,3 L23.5,3 Q25,3 25,4.5 L25,6 L0,6 Z" fill="#e40d0d"/><path d="M1.5,8 L23.5,8 L22.5,28 Q22.3,31 19.5,31 L5.5,31 Q2.7,31 2.5,28 Z" fill="#e40d0d"/></svg>
<div class="t" style="left:625.9px;top:1043.5px;font-size:27.62px;color:#1c1f2b;font-weight:700;letter-spacing:0.95px;">Odečty bytových vodoměrů</div>
<div class="t" style="left:1146.7px;top:1048.8px;font-size:27.62px;color:#4a4e5c;font-weight:400;letter-spacing:-1.04px;">2. – 14. 7. 2022</div>
<div class="abs" style="left:1429.5px;top:1047.4px;width:213.7px;height:37px;border-radius:19px;background:#ffb822"></div>
<div class="t" style="left:1447.8px;top:1054.6px;font-size:21.08px;color:#ffffff;font-weight:700;letter-spacing:0.5px;">Intetní informace</div>
<div class="abs" style="left:1802px;top:1030.0px;width:67.4px;height:67px;border-radius:50%;background:#edf1fd"></div>
<div class="t" style="left:1820.8px;top:1049.9px;font-size:23.98px;color:#5d78ff;font-weight:400;letter-spacing:-2.22px;-webkit-text-stroke:0.5px #5d78ff;">PF</div>
<div class="t" style="left:1881.2px;top:1049.0px;font-size:27.62px;color:#4a4e5c;font-weight:400;letter-spacing:-0.41px;">JUDr. Petr</div>
<div class="t" style="left:2012.9px;top:1049.0px;font-size:27.62px;color:#1c1f2b;font-weight:700;letter-spacing:0.17px;">Fidler</div>
<div class="t" style="left:2200.8px;top:1049.0px;font-size:27.62px;color:#4a4e5c;font-weight:400;letter-spacing:-0.42px;">22. 7. 2022, 0:05</div>
<svg class="abs" style="left:2525px;top:1046.0px" width="33" height="32" viewBox="0 0 33 32"><circle cx="14" cy="14" r="10" fill="none" stroke="#13b483" stroke-width="4"/><path d="M21.5,21.5 L29,28.8" stroke="#13b483" stroke-width="4.4" stroke-linecap="round"/></svg>
<svg class="abs" style="left:2601.5px;top:1046.9px" width="30.5" height="30.5" viewBox="0 0 33 33"><path d="M1.5,32 L1.5,25.5 L20.5,6.5 L26.5,12.5 L7.5,31.5 Z" fill="#ffb41f" stroke="#ffb41f" stroke-width="1.2" stroke-linejoin="round"/><path d="M22.5,4.5 L25,2 Q27,0.3 29,2 L31,4 Q32.7,6 31,8 L28.5,10.5 Z" fill="#ffb41f"/></svg>
<svg class="abs" style="left:2677px;top:1048.4px" width="31" height="28" viewBox="0 0 31 28"><rect x="0" y="0" width="31" height="6.5" rx="1.5" fill="#5f7afe"/><path d="M2,8.5 L29,8.5 L29,25.5 Q29,27.5 27,27.5 L4,27.5 Q2,27.5 2,25.5 Z" fill="#5f7afe"/><rect x="10.5" y="11.5" width="9" height="3" rx="1.5" fill="#ffffff"/></svg>
<svg class="abs" style="left:2755px;top:1045.4px" width="25" height="31" viewBox="0 0 25 31"><path d="M0,4.5 Q0,3 1.5,3 L8,3 L9,1 Q9.5,0 11,0 L14,0 Q15.5,0 16,1 L17,3 L23.5,3 Q25,3 25,4.5 L25,6 L0,6 Z" fill="#e40d0d"/><path d="M1.5,8 L23.5,8 L22.5,28 Q22.3,31 19.5,31 L5.5,31 Q2.7,31 2.5,28 Z" fill="#e40d0d"/></svg>
<div class="t" style="left:625.9px;top:1157.4px;font-size:27.62px;color:#1c1f2b;font-weight:700;letter-spacing:0.95px;">Velkokapacitní kontejner</div>
<div class="t" style="left:1146.7px;top:1162.7px;font-size:27.62px;color:#4a4e5c;font-weight:400;letter-spacing:-1.46px;">12. – 31. 7. 2022</div>
<div class="abs" style="left:1429.5px;top:1161.3px;width:263.7px;height:37px;border-radius:19px;background:#0bbb87"></div>
<div class="t" style="left:1447.8px;top:1168.5px;font-size:21.08px;color:#ffffff;font-weight:700;letter-spacing:0.55px;">Všeobecná informace</div>
<div class="abs" style="left:1802px;top:1143.8999999999999px;width:67.4px;height:67px;border-radius:50%;background:#edf1fd"></div>
<div class="t" style="left:1820.8px;top:1163.8px;font-size:23.98px;color:#5d78ff;font-weight:400;letter-spacing:-2.22px;-webkit-text-stroke:0.5px #5d78ff;">PF</div>
<div class="t" style="left:1881.2px;top:1162.9px;font-size:27.62px;color:#4a4e5c;font-weight:400;letter-spacing:-0.41px;">JUDr. Petr</div>
<div class="t" style="left:2012.9px;top:1162.9px;font-size:27.62px;color:#1c1f2b;font-weight:700;letter-spacing:0.17px;">Fidler</div>
<div class="t" style="left:2200.8px;top:1162.9px;font-size:27.62px;color:#4a4e5c;font-weight:400;letter-spacing:-0.42px;">22. 7. 2022, 0:00</div>
<svg class="abs" style="left:2525px;top:1159.8999999999999px" width="33" height="32" viewBox="0 0 33 32"><circle cx="14" cy="14" r="10" fill="none" stroke="#13b483" stroke-width="4"/><path d="M21.5,21.5 L29,28.8" stroke="#13b483" stroke-width="4.4" stroke-linecap="round"/></svg>
<svg class="abs" style="left:2601.5px;top:1160.8px" width="30.5" height="30.5" viewBox="0 0 33 33"><path d="M1.5,32 L1.5,25.5 L20.5,6.5 L26.5,12.5 L7.5,31.5 Z" fill="#ffb41f" stroke="#ffb41f" stroke-width="1.2" stroke-linejoin="round"/><path d="M22.5,4.5 L25,2 Q27,0.3 29,2 L31,4 Q32.7,6 31,8 L28.5,10.5 Z" fill="#ffb41f"/></svg>
<svg class="abs" style="left:2677px;top:1162.3px" width="31" height="28" viewBox="0 0 31 28"><rect x="0" y="0" width="31" height="6.5" rx="1.5" fill="#5f7afe"/><path d="M2,8.5 L29,8.5 L29,25.5 Q29,27.5 27,27.5 L4,27.5 Q2,27.5 2,25.5 Z" fill="#5f7afe"/><rect x="10.5" y="11.5" width="9" height="3" rx="1.5" fill="#ffffff"/></svg>
<svg class="abs" style="left:2755px;top:1159.3px" width="25" height="31" viewBox="0 0 25 31"><path d="M0,4.5 Q0,3 1.5,3 L8,3 L9,1 Q9.5,0 11,0 L14,0 Q15.5,0 16,1 L17,3 L23.5,3 Q25,3 25,4.5 L25,6 L0,6 Z" fill="#e40d0d"/><path d="M1.5,8 L23.5,8 L22.5,28 Q22.3,31 19.5,31 L5.5,31 Q2.7,31 2.5,28 Z" fill="#e40d0d"/></svg>
<div class="t" style="left:625.9px;top:1273.7px;font-size:27.62px;color:#1c1f2b;font-weight:700;letter-spacing:0.59px;">Úklid a čištění garáže</div>
<div class="t" style="left:1146.7px;top:1279.0px;font-size:27.62px;color:#4a4e5c;font-weight:400;letter-spacing:-1.01px;">1. – 26. 7. 2022</div>
<div class="abs" style="left:1429.5px;top:1277.6px;width:109.9px;height:37px;border-radius:19px;background:#a8a5a5"></div>
<div class="t" style="left:1447.8px;top:1284.8px;font-size:21.08px;color:#ffffff;font-weight:700;letter-spacing:0.51px;">Údržba</div>
<div class="abs" style="left:1802px;top:1260.1999999999998px;width:67.4px;height:67px;border-radius:50%;background:#edf1fd"></div>
<div class="t" style="left:1820.8px;top:1280.1px;font-size:23.98px;color:#5d78ff;font-weight:400;letter-spacing:-2.22px;-webkit-text-stroke:0.5px #5d78ff;">PF</div>
<div class="t" style="left:1881.2px;top:1279.2px;font-size:27.62px;color:#4a4e5c;font-weight:400;letter-spacing:-0.41px;">JUDr. Petr</div>
<div class="t" style="left:2012.9px;top:1279.2px;font-size:27.62px;color:#1c1f2b;font-weight:700;letter-spacing:0.17px;">Fidler</div>
<div class="t" style="left:2200.8px;top:1279.2px;font-size:27.62px;color:#4a4e5c;font-weight:400;letter-spacing:-0.83px;">21. 7. 2022, 23:59</div>
<svg class="abs" style="left:2525px;top:1276.1999999999998px" width="33" height="32" viewBox="0 0 33 32"><circle cx="14" cy="14" r="10" fill="none" stroke="#13b483" stroke-width="4"/><path d="M21.5,21.5 L29,28.8" stroke="#13b483" stroke-width="4.4" stroke-linecap="round"/></svg>
<svg class="abs" style="left:2601.5px;top:1277.1px" width="30.5" height="30.5" viewBox="0 0 33 33"><path d="M1.5,32 L1.5,25.5 L20.5,6.5 L26.5,12.5 L7.5,31.5 Z" fill="#ffb41f" stroke="#ffb41f" stroke-width="1.2" stroke-linejoin="round"/><path d="M22.5,4.5 L25,2 Q27,0.3 29,2 L31,4 Q32.7,6 31,8 L28.5,10.5 Z" fill="#ffb41f"/></svg>
<svg class="abs" style="left:2677px;top:1278.6px" width="31" height="28" viewBox="0 0 31 28"><rect x="0" y="0" width="31" height="6.5" rx="1.5" fill="#5f7afe"/><path d="M2,8.5 L29,8.5 L29,25.5 Q29,27.5 27,27.5 L4,27.5 Q2,27.5 2,25.5 Z" fill="#5f7afe"/><rect x="10.5" y="11.5" width="9" height="3" rx="1.5" fill="#ffffff"/></svg>
<svg class="abs" style="left:2755px;top:1275.6px" width="25" height="31" viewBox="0 0 25 31"><path d="M0,4.5 Q0,3 1.5,3 L8,3 L9,1 Q9.5,0 11,0 L14,0 Q15.5,0 16,1 L17,3 L23.5,3 Q25,3 25,4.5 L25,6 L0,6 Z" fill="#e40d0d"/><path d="M1.5,8 L23.5,8 L22.5,28 Q22.3,31 19.5,31 L5.5,31 Q2.7,31 2.5,28 Z" fill="#e40d0d"/></svg>
<div class="t" style="left:625.9px;top:1387.6px;font-size:27.62px;color:#1c1f2b;font-weight:700;letter-spacing:0.93px;">Odstávka teplé vody</div>
<div class="t" style="left:1146.7px;top:1392.9px;font-size:27.62px;color:#4a4e5c;font-weight:400;letter-spacing:-1.07px;">1. – 8. 7. 2022</div>
<div class="abs" style="left:1429.5px;top:1391.5px;width:109.9px;height:37px;border-radius:19px;background:#a8a5a5"></div>
<div class="t" style="left:1447.8px;top:1398.7px;font-size:21.08px;color:#ffffff;font-weight:700;letter-spacing:0.51px;">Údržba</div>
<div class="abs" style="left:1802px;top:1374.1px;width:67.4px;height:67px;border-radius:50%;background:#edf1fd"></div>
<div class="t" style="left:1820.8px;top:1394.0px;font-size:23.98px;color:#5d78ff;font-weight:400;letter-spacing:-2.22px;-webkit-text-stroke:0.5px #5d78ff;">PF</div>
<div class="t" style="left:1881.2px;top:1393.1px;font-size:27.62px;color:#4a4e5c;font-weight:400;letter-spacing:-0.41px;">JUDr. Petr</div>
<div class="t" style="left:2012.9px;top:1393.1px;font-size:27.62px;color:#1c1f2b;font-weight:700;letter-spacing:0.17px;">Fidler</div>
<div class="t" style="left:2200.8px;top:1393.1px;font-size:27.62px;color:#4a4e5c;font-weight:400;letter-spacing:-0.83px;">21. 7. 2022, 23:56</div>
<svg class="abs" style="left:2525px;top:1390.1px" width="33" height="32" viewBox="0 0 33 32"><circle cx="14" cy="14" r="10" fill="none" stroke="#13b483" stroke-width="4"/><path d="M21.5,21.5 L29,28.8" stroke="#13b483" stroke-width="4.4" stroke-linecap="round"/></svg>
<svg class="abs" style="left:2601.5px;top:1391.0px" width="30.5" height="30.5" viewBox="0 0 33 33"><path d="M1.5,32 L1.5,25.5 L20.5,6.5 L26.5,12.5 L7.5,31.5 Z" fill="#ffb41f" stroke="#ffb41f" stroke-width="1.2" stroke-linejoin="round"/><path d="M22.5,4.5 L25,2 Q27,0.3 29,2 L31,4 Q32.7,6 31,8 L28.5,10.5 Z" fill="#ffb41f"/></svg>
<svg class="abs" style="left:2677px;top:1392.5px" width="31" height="28" viewBox="0 0 31 28"><rect x="0" y="0" width="31" height="6.5" rx="1.5" fill="#5f7afe"/><path d="M2,8.5 L29,8.5 L29,25.5 Q29,27.5 27,27.5 L4,27.5 Q2,27.5 2,25.5 Z" fill="#5f7afe"/><rect x="10.5" y="11.5" width="9" height="3" rx="1.5" fill="#ffffff"/></svg>
<svg class="abs" style="left:2755px;top:1389.5px" width="25" height="31" viewBox="0 0 25 31"><path d="M0,4.5 Q0,3 1.5,3 L8,3 L9,1 Q9.5,0 11,0 L14,0 Q15.5,0 16,1 L17,3 L23.5,3 Q25,3 25,4.5 L25,6 L0,6 Z" fill="#e40d0d"/><path d="M1.5,8 L23.5,8 L22.5,28 Q22.3,31 19.5,31 L5.5,31 Q2.7,31 2.5,28 Z" fill="#e40d0d"/></svg>
<div class="t" style="left:625.9px;top:1503.1px;font-size:27.62px;color:#1c1f2b;font-weight:700;letter-spacing:0.61px;">Nefunkční osvětlení</div>
<div class="t" style="left:1146.7px;top:1508.4px;font-size:27.62px;color:#4a4e5c;font-weight:400;letter-spacing:-0.93px;">21. – 30. 7. 2022</div>
<div class="abs" style="left:1429.5px;top:1507px;width:113.5px;height:37px;border-radius:19px;background:#5d78ff"></div>
<div class="t" style="left:1447.8px;top:1514.2px;font-size:21.08px;color:#ffffff;font-weight:700;letter-spacing:0.99px;">Oprava</div>
<div class="abs" style="left:1802px;top:1489.6px;width:67.4px;height:67px;border-radius:50%;background:#edf1fd"></div>
<div class="t" style="left:1820.8px;top:1509.5px;font-size:23.98px;color:#5d78ff;font-weight:400;letter-spacing:-2.22px;-webkit-text-stroke:0.5px #5d78ff;">PF</div>
<div class="t" style="left:1881.2px;top:1508.6px;font-size:27.62px;color:#4a4e5c;font-weight:400;letter-spacing:-0.41px;">JUDr. Petr</div>
<div class="t" style="left:2012.9px;top:1508.6px;font-size:27.62px;color:#1c1f2b;font-weight:700;letter-spacing:0.17px;">Fidler</div>
<div class="t" style="left:2200.8px;top:1508.6px;font-size:27.62px;color:#4a4e5c;font-weight:400;letter-spacing:-0.88px;">21. 7. 2022, 23:52</div>
<svg class="abs" style="left:2525px;top:1505.6px" width="33" height="32" viewBox="0 0 33 32"><circle cx="14" cy="14" r="10" fill="none" stroke="#13b483" stroke-width="4"/><path d="M21.5,21.5 L29,28.8" stroke="#13b483" stroke-width="4.4" stroke-linecap="round"/></svg>
<svg class="abs" style="left:2601.5px;top:1506.5px" width="30.5" height="30.5" viewBox="0 0 33 33"><path d="M1.5,32 L1.5,25.5 L20.5,6.5 L26.5,12.5 L7.5,31.5 Z" fill="#ffb41f" stroke="#ffb41f" stroke-width="1.2" stroke-linejoin="round"/><path d="M22.5,4.5 L25,2 Q27,0.3 29,2 L31,4 Q32.7,6 31,8 L28.5,10.5 Z" fill="#ffb41f"/></svg>
<svg class="abs" style="left:2677px;top:1508px" width="31" height="28" viewBox="0 0 31 28"><rect x="0" y="0" width="31" height="6.5" rx="1.5" fill="#5f7afe"/><path d="M2,8.5 L29,8.5 L29,25.5 Q29,27.5 27,27.5 L4,27.5 Q2,27.5 2,25.5 Z" fill="#5f7afe"/><rect x="10.5" y="11.5" width="9" height="3" rx="1.5" fill="#ffffff"/></svg>
<svg class="abs" style="left:2755px;top:1505px" width="25" height="31" viewBox="0 0 25 31"><path d="M0,4.5 Q0,3 1.5,3 L8,3 L9,1 Q9.5,0 11,0 L14,0 Q15.5,0 16,1 L17,3 L23.5,3 Q25,3 25,4.5 L25,6 L0,6 Z" fill="#e40d0d"/><path d="M1.5,8 L23.5,8 L22.5,28 Q22.3,31 19.5,31 L5.5,31 Q2.7,31 2.5,28 Z" fill="#e40d0d"/></svg>
</div></div>
<div class="abs" style="left:511.3px;top:472.5px;width:2.2px;height:1527.5px;background:#e2e3ea"></div>
</body></html>
